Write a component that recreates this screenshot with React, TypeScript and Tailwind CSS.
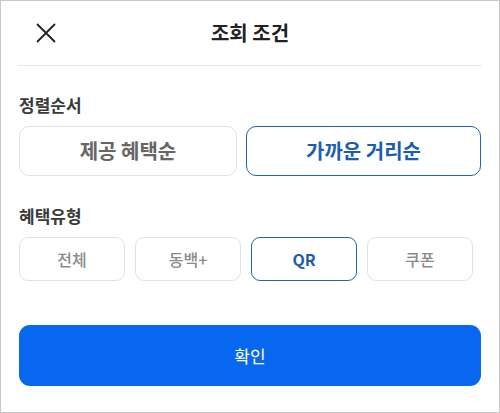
import { FC, useState } from "react";

const sorts = ["제공 혜택순", "가까운 거리순"];
const types = ["전체", "동백+", "QR", "쿠폰"];

const App: FC = () => {
  const [sort, setSort] = useState(1);
  const [type, setType] = useState(2);

  return (
    <div
      className="flex h-[413px] w-[500px] flex-col border border-[#c8c8c8] bg-white"
      style={{ fontFamily: '"Noto Sans CJK KR", "Noto Sans", sans-serif' }}
    >
      <div className="mx-[17px] flex h-[65px] items-center justify-between border-b border-[#e8e8e8]">
        <button className="flex h-[40px] w-[56px] items-center justify-center">
          <svg width="20" height="20" viewBox="0 0 20 20" fill="none" stroke="#222" strokeWidth="1.8" strokeLinecap="round">
            <path d="M1.5 1.5 L18.5 18.5 M18.5 1.5 L1.5 18.5" />
          </svg>
        </button>
        <h1 className="text-[20px] font-bold text-[#222]">조회 조건</h1>
        <div className="w-[56px]" />
      </div>

      <div className="flex flex-col px-[18px]">
        <h3 className="mt-[27px] text-[17px] leading-[24px] font-semibold text-[#3a3a3a]">정렬순서</h3>
        <div className="mt-[9px] flex gap-[9px]">
          {sorts.map((s, i) => (
            <button
              key={s}
              onClick={() => setSort(i)}
              className={
                i === sort
                  ? "h-[50px] flex-1 rounded-[10px] border-[1.5px] border-[#2264b4] text-[20px] font-semibold text-[#1c5db2]"
                  : "h-[50px] w-[218px] rounded-[10px] border border-[#e2e2e2] text-[20px] font-semibold text-[#666]"
              }
            >
              {s}
            </button>
          ))}
        </div>

        <h3 className="mt-[28px] text-[17px] leading-[24px] font-semibold text-[#3a3a3a]">혜택유형</h3>
        <div className="mt-[9px] flex gap-[10px]">
          {types.map((t, i) => (
            <button
              key={t}
              onClick={() => setType(i)}
              className={
                i === type
                  ? "h-[44px] w-[106px] rounded-[9px] border-[1.5px] border-[#2264b4] text-[16px] font-bold text-[#1c5db2]"
                  : "h-[44px] w-[106px] rounded-[9px] border border-[#e2e2e2] text-[16px] font-medium text-[#8a8a8a]"
              }
            >
              {t}
            </button>
          ))}
        </div>

        <button className="mt-[44px] h-[61px] w-full rounded-[11px] bg-[#0867ef] text-[17px] font-normal text-white">
          확인
        </button>
      </div>
    </div>
  );
};

export default App;
